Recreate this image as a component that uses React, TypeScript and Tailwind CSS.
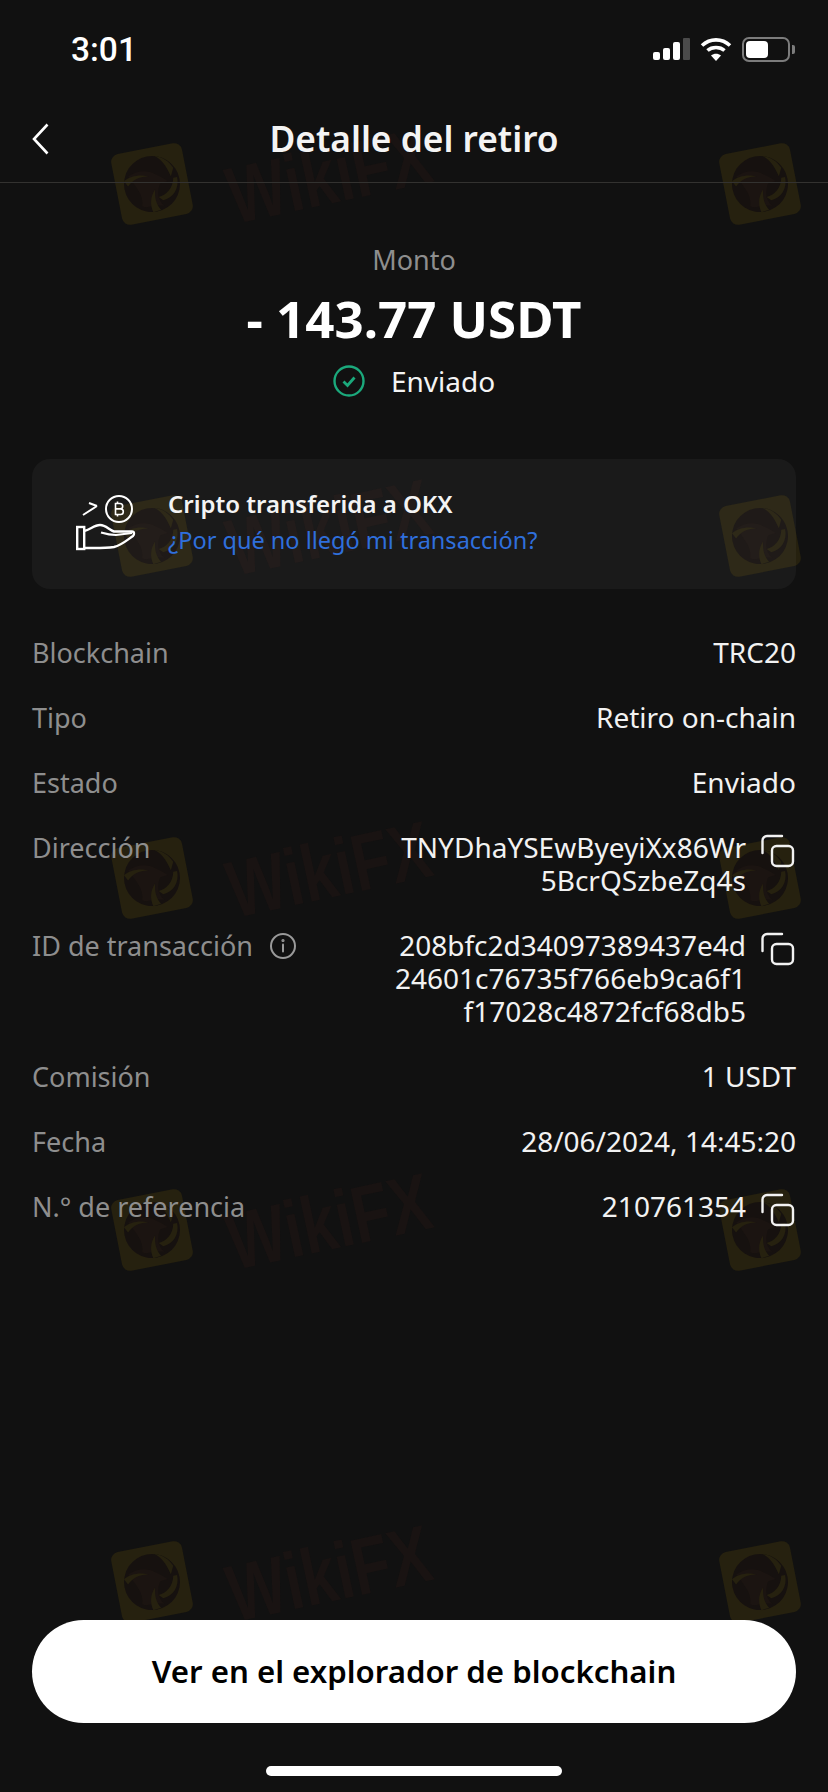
import React from "react";

function CopyIcon() {
  return (
    <svg width="34" height="34" viewBox="0 0 34 34" fill="none" stroke="#f2f2f2" strokeWidth="2.4" className="shrink-0 mt-[3px] -ml-[1px] mr-[1px]">
      <path d="M21 2H6a4.500 4.500 0 0 0-4.500 4.500V19" strokeLinecap="round" />
      <rect x="11" y="12" width="21" height="20" rx="4.500" />
    </svg>
  );
}

function Mark() {
  return (
    <svg width="84" height="84" viewBox="0 0 84 84" className="shrink-0">
      <g transform="rotate(-11 42 42)">
        <rect x="6" y="6" width="72" height="72" rx="8" fill="#26210f" />
        <circle cx="42" cy="42" r="28" fill="#16110f" />
        <path d="M20 30 C30 26 40 27 47 33 C52 36 56 40 58 42 L50 43 C46 50 44 58 50 66 C40 62 34 66 28 62 C32 52 26 42 20 30 Z" fill="#1b1411" />
        <path d="M50 15 C58 22 60 30 62 38 L66 30 C63 23 57 17 50 15 Z" fill="#26210f" />
        <path d="M68 40 C68 52 60 60 50 60 L46 56 C54 56 62 50 64 40 Z" fill="#26210f" />
        <path d="M15 34 C22 30 32 30 40 34 C32 32 24 34 18 40 Z" fill="#26210f" />
        <path d="M38 70 C36 62 38 54 44 48 C42 56 42 62 46 69 Z" fill="#26210f" />
      </g>
    </svg>
  );
}

function Watermark({ className }: { className: string }) {
  return (
    <div className={"absolute flex items-center gap-[32px] pointer-events-none " + className}>
      <Mark />
      <span className="text-[62px] leading-none font-black text-[#191312] -rotate-12 scale-y-[1.3] -translate-y-[8px] font-['Liberation_Sans',sans-serif]">WikiFX</span>
    </div>
  );
}

function Row({ label, children, info, copy }: { label: string; children: React.ReactNode; info?: boolean; copy?: boolean }) {
  return (
    <div className="flex justify-between items-start">
      <div className="flex items-center gap-[16px] text-[27px] text-[#8e8e8e]">
        <span>{label}</span>
        {info && (
          <svg width="28" height="28" viewBox="0 0 28 28" fill="none" stroke="#9a9a9a" strokeWidth="2">
            <circle cx="14" cy="14" r="12" />
            <path d="M14 12.500v7" strokeLinecap="round" />
            <circle cx="14" cy="8.500" r="0.600" fill="#9a9a9a" />
          </svg>
        )}
      </div>
      <div className="flex items-start gap-[16px]">
        <div className="text-right text-[#f2f2f2]">{children}</div>
        {copy && <CopyIcon />}
      </div>
    </div>
  );
}

export default function App() {
  return (
    <div className="relative w-[828px] h-[1792px] overflow-hidden bg-[#111111] flex flex-col font-['Noto_Sans',sans-serif]">
      <Watermark className="left-[110px] top-[142px]" />
      <Watermark className="left-[110px] top-[494px]" />
      <Watermark className="left-[110px] top-[836px]" />
      <Watermark className="left-[110px] top-[1188px]" />
      <Watermark className="left-[110px] top-[1540px]" />
      <Watermark className="left-[718px] top-[142px]" />
      <Watermark className="left-[718px] top-[494px]" />
      <Watermark className="left-[718px] top-[836px]" />
      <Watermark className="left-[718px] top-[1188px]" />
      <Watermark className="left-[718px] top-[1540px]" />

      <div className="relative flex flex-col flex-1">
        <div className="h-[98px] pl-[71px] pr-[33px] flex items-center justify-between text-white">
          <span className="text-[33.500px] leading-none font-medium translate-y-[1px] font-['Roboto',sans-serif]">3:01</span>
          <div className="flex items-center">
            <svg width="37" height="22" viewBox="0 0 37 22" className="mr-[10px]">
              <rect x="0" y="14" width="7" height="8" rx="2" fill="#fff" />
              <rect x="10" y="10" width="7" height="12" rx="2" fill="#fff" />
              <rect x="20" y="4" width="7" height="18" rx="2" fill="#fff" />
              <rect x="30" y="0" width="7" height="22" rx="1" fill="#4a4a4a" />
            </svg>
            <svg width="32" height="24" viewBox="0 0 32 24" fill="none" stroke="#fff" strokeWidth="3.600" className="mr-[10px]">
              <path d="M2 8.500C10 1 22 1 30 8.500" />
              <path d="M7.500 13.500C12 9.500 20 9.500 24.500 13.500" />
              <path d="M16 24l-5-5.500c3-2.200 7-2.200 10 0z" fill="#fff" stroke="none" />
            </svg>
            <div className="w-[48px] h-[25px] rounded-[7px] border-2 border-[#7c7c7c] p-[2px] flex">
              <div className="w-[22px] bg-white rounded-[4px]" />
            </div>
            <div className="w-[3px] h-[9px] ml-[2px] rounded-r-[2px] bg-[#7c7c7c]" />
          </div>
        </div>

        <div className="h-[85px] px-[32px] border-b border-[#333230] flex items-center relative">
          <svg width="17" height="32" viewBox="0 0 17 32" fill="none" stroke="#fff" strokeWidth="2.600" className="-translate-y-[1px]">
            <path d="M15.500 1.500L2 16l13.500 14.500" />
          </svg>
          <h1 className="flex-1 text-center text-[35.300px] leading-none font-semibold text-[#f4f4f4] pr-[17px] -translate-y-[1px]">Detalle del retiro</h1>
        </div>

        <div className="flex flex-col items-center pt-[61px]">
          <div className="text-[27px] leading-[32px] text-[#8e8e8e]">Monto</div>
          <div className="text-[51px] leading-[60px] font-bold text-white mt-[12px]">- 143.77 USDT</div>
          <div className="flex items-center gap-[26px] mt-[16px]">
            <svg width="32" height="32" viewBox="0 0 32 32" fill="none" stroke="#1ba97c" strokeWidth="2.400">
              <circle cx="16" cy="16" r="14.500" />
              <path d="M10.500 16.500l4 4 7-8" strokeWidth="2.800" />
            </svg>
            <span className="text-[28px] leading-[34px] text-[#f4f4f4]">Enviado</span>
          </div>
        </div>

        <div className="mx-[32px] mt-[61px] h-[130px] rounded-[18px] bg-white/[0.04] flex items-center pl-[44px] gap-[32px]">
          <svg width="60" height="58" viewBox="0 0 60 58" fill="none" stroke="#fff" strokeWidth="2" className="shrink-0">
            <circle cx="43" cy="14" r="13" />
            <path d="M39.500 8.500h4.500a2.700 2.700 0 0 1 0 5.400h-4.500h5a2.800 2.800 0 0 1 0 5.600h-5zM41.500 6.500v2M41.500 19.500v2" strokeWidth="1.600" />
            <path d="M7 20l14-9M13 8l8 3" />
            <rect x="1.200" y="32" width="7" height="22" strokeWidth="2.400" />
            <path d="M8 36C14 35 18 30 24 30C30 30 33 35 38 36.500L56 36.500C58.500 36.500 58.500 39.500 57 41C51 45 46 50 38 52C28 53.500 18 53 8 53" strokeWidth="2.400" />
            <path d="M25 37.500C30 39 35 40 40 40L56 38" strokeWidth="2.200" />
          </svg>
          <div className="flex flex-col -translate-y-[2px]">
            <span className="text-[24px] leading-[37px] font-semibold text-[#f4f4f4]">Cripto transferida a OKX</span>
            <span className="text-[23.500px] leading-[37px] text-[#2f6fdc]">¿Por qué no llegó mi transacción?</span>
          </div>
        </div>

        <div className="mx-[32px] mt-[47px] flex flex-col gap-[32px] text-[28px] leading-[33px]">
          <Row label="Blockchain">TRC20</Row>
          <Row label="Tipo">Retiro on-chain</Row>
          <Row label="Estado">Enviado</Row>
          <Row label="Dirección" copy>TNYDhaYSEwByeyiXx86Wr<br />5BcrQSzbeZq4s</Row>
          <Row label="ID de transacción" info copy>208bfc2d34097389437e4d<br />24601c76735f766eb9ca6f1<br />f17028c4872fcf68db5</Row>
          <Row label="Comisión">1 USDT</Row>
          <Row label="Fecha">28/06/2024, 14:45:20</Row>
          <Row label="N.° de referencia" copy>210761354</Row>
        </div>

        <div className="mt-auto px-[32px] flex flex-col items-center">
          <button className="w-full h-[103px] rounded-full bg-white text-black text-[31.200px] font-semibold">Ver en el explorador de blockchain</button>
          <div className="w-[296px] h-[10px] rounded-full bg-white mt-[43px] mb-[16px]" />
        </div>
      </div>
    </div>
  );
}
